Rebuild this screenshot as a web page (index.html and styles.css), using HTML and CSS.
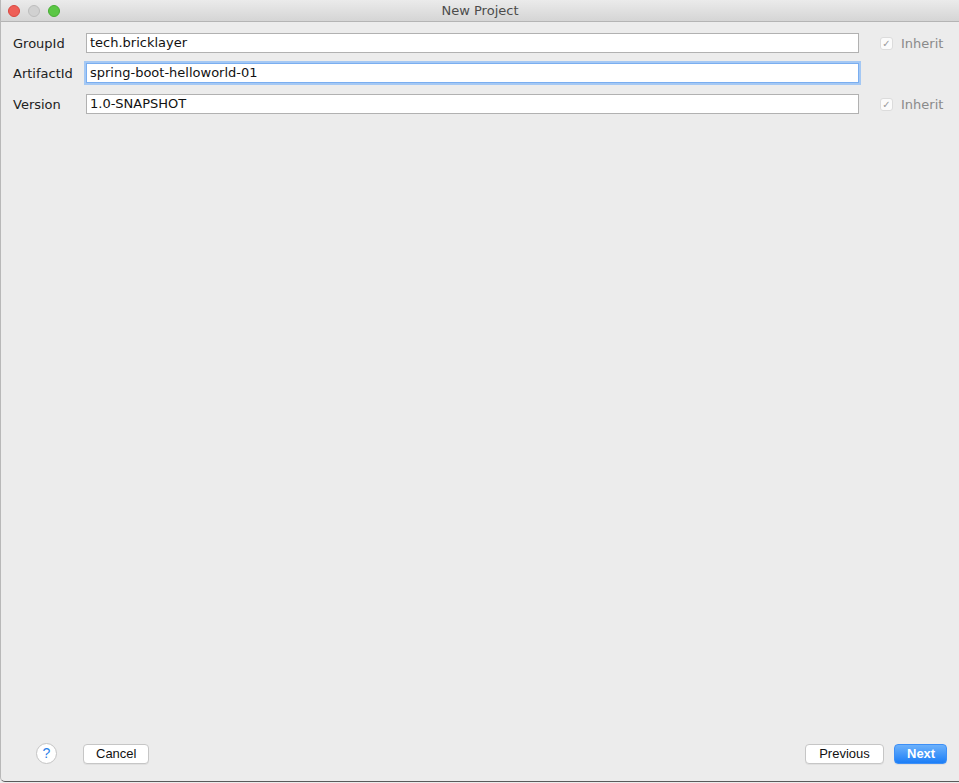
FILE: index.html
```html
<!DOCTYPE html>
<html>
<head>
    <meta charset="UTF-8">
    <title>New Project</title>
    <link rel="stylesheet" href="styles.css">
</head>
<body>
    <div class="window">
        <div class="titlebar">
            <div class="lights">
                <span class="light red"></span>
                <span class="light gray"></span>
                <span class="light green"></span>
            </div>
            <div class="title">New Project</div>
        </div>
        <div class="content">
            <div class="form">
                <div class="row">
                    <label class="label">GroupId</label>
                    <div class="field">tech.bricklayer</div>
                    <div class="inherit"><span class="check">&#10003;</span>Inherit</div>
                </div>
                <div class="row">
                    <label class="label">ArtifactId</label>
                    <div class="field focused">spring-boot-helloworld-01</div>
                    <div class="inherit"></div>
                </div>
                <div class="row last">
                    <label class="label">Version</label>
                    <div class="field">1.0-SNAPSHOT</div>
                    <div class="inherit"><span class="check">&#10003;</span>Inherit</div>
                </div>
            </div>
            <div class="footer">
                <div class="left">
                    <button class="help">?</button>
                    <button class="btn">Cancel</button>
                </div>
                <div class="right">
                    <button class="btn">Previous</button>
                    <button class="btn primary">Next</button>
                </div>
            </div>
        </div>
    </div>
</body>
</html>
```
FILE: styles.css
```css
html, body {
    margin: 0;
    height: 100%;
}

body {
    font-family: "DejaVu Sans", "Liberation Sans", sans-serif;
    font-size: 13px;
    color: #222;
    background: #ececec;
}

.window {
    height: 782px;
    display: flex;
    flex-direction: column;
    background: #ececec;
    border-left: 1px solid #b8b8b8;
    border-bottom: 1px solid #5a5a5a;
    border-bottom-left-radius: 5px;
    box-sizing: border-box;
}

.titlebar {
    height: 21px;
    display: flex;
    align-items: center;
    position: relative;
    background: linear-gradient(#ebebeb, #d5d5d5);
    border-bottom: 1px solid #b4b4b4;
    flex-shrink: 0;
}

.lights {
    display: flex;
    gap: 8px;
    padding-left: 7px;
}

.light {
    width: 12px;
    height: 12px;
    border-radius: 50%;
    box-sizing: border-box;
}

.light.red {
    background: #ee5f57;
    border: 1px solid #d9473f;
}

.light.gray {
    background: #d1d1d1;
    border: 1px solid #bdbdbd;
}

.light.green {
    background: #5bc745;
    border: 1px solid #46ad33;
}

.title {
    position: absolute;
    left: 0;
    right: 0;
    text-align: center;
    font-size: 13px;
    color: #4c4c4c;
}

.content {
    flex: 1;
    display: flex;
    flex-direction: column;
    justify-content: space-between;
}

.form {
    padding: 11px 0 0 12px;
    display: flex;
    flex-direction: column;
    gap: 10px;
}

.row {
    display: flex;
    align-items: center;
    height: 20px;
}

.row.last {
    margin-top: 1px;
}

.label {
    width: 73px;
    color: #222;
}

.field {
    width: 773px;
    height: 20px;
    box-sizing: border-box;
    background: #fff;
    border: 1px solid #b1b1b1;
    padding: 0 3px;
    line-height: 18px;
    color: #111;
}

.field.focused {
    border-color: #7aaef0;
    box-shadow: 0 0 0 2px #a4c8f4;
}

.inherit {
    margin-left: 21px;
    display: flex;
    align-items: center;
    color: #8a8a8a;
}

.check {
    width: 13px;
    height: 13px;
    box-sizing: border-box;
    border: 1px solid #dcdcdc;
    border-radius: 3px;
    background: #fbfbfb;
    font-size: 10px;
    line-height: 11px;
    text-align: center;
    color: #9a9a9a;
    margin-right: 8px;
}

.footer {
    display: flex;
    justify-content: space-between;
    align-items: center;
    padding: 0 12px 17px 35px;
}

.left, .right {
    display: flex;
    align-items: center;
}

.left {
    gap: 26px;
}

.right {
    gap: 10px;
}

button {
    font-family: "Liberation Sans", Arial, sans-serif;
    font-size: 13px;
}

.help {
    width: 21px;
    height: 21px;
    border-radius: 50%;
    border: 1px solid #c4c4c4;
    background: #fff;
    color: #2a7fe8;
    padding: 0;
    font-size: 14px;
    line-height: 19px;
}

.btn {
    height: 20px;
    padding: 0 12px;
    border: 1px solid #c6c6c6;
    border-radius: 4px;
    background: #fff;
    color: #111;
    line-height: 18px;
    box-shadow: 0 1px 0 rgba(0, 0, 0, 0.05);
}

.left .btn {
    width: 66px;
}

.right .btn {
    width: 79px;
}

.btn.primary {
    width: 53px;
    border-color: #3d8ff6;
    background: linear-gradient(#6cb1fb, #1b7ef7);
    color: #fff;
    font-weight: bold;
}
```
